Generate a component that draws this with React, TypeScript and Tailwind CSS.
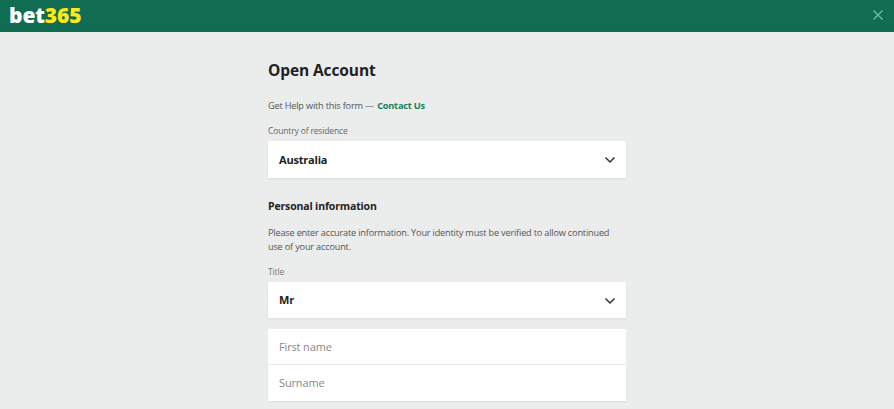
import React from "react";

const font = { fontFamily: '"Open Sans", "Noto Sans", sans-serif' };

function Chevron() {
  return (
    <svg width="12" height="8" viewBox="0 0 12 8" fill="none" className="shrink-0">
      <path d="M1.5 1.5 L6 6 L10.5 1.5" stroke="#333" strokeWidth="1.5" />
    </svg>
  );
}

function Select({ value, className }: { value: string; className: string }) {
  return (
    <div className={`flex items-center justify-between bg-white pl-[11px] pr-[10px] pt-[1px] shadow-[0_1px_2px_rgba(0,0,0,0.08)] ${className}`}>
      <span className="text-[11px] font-bold tracking-[-0.2px] text-[#222]">{value}</span>
      <Chevron />
    </div>
  );
}

export default function App() {
  return (
    <div className="h-[409px] w-[894px] overflow-hidden bg-[#ebecec]" style={font}>
      <header className="flex h-[32px] items-center justify-between border-b border-[#0f6a4e] bg-[#106d51] pb-[1px] pl-[9px] pr-[11px]">
        <div className="text-[21px] font-extrabold leading-none tracking-[-0.1px]">
          <span className="text-white">bet</span>
          <span className="text-[#ffe718]">365</span>
        </div>
        <svg width="10" height="10" viewBox="0 0 10 10" fill="none">
          <path d="M0.5 0.5 L9.5 9.5 M9.5 0.5 L0.5 9.5" stroke="#6fc4a6" strokeWidth="1.2" />
        </svg>
      </header>
      <main className="mx-auto w-[358px] pt-[27px]">
        <h1 className="text-[15.5px] font-bold leading-[22px] tracking-[-0.1px] text-[#222]">Open Account</h1>
        <p className="mt-[18px] text-[9.2px] leading-[14px] tracking-[-0.2px] text-[#555]">
          Get Help with this form — <span className="ml-[1px] font-bold text-[#14805e]">Contact Us</span>
        </p>
        <p className="mt-[12px] text-[8.5px] leading-[12px] tracking-[-0.15px] text-[#666]">Country of residence</p>
        <Select value="Australia" className="mt-[4px] h-[37px]" />
        <h2 className="mt-[20px] text-[10.5px] font-bold leading-[16px] tracking-[-0.15px] text-[#222]">Personal information</h2>
        <p className="mt-[12px] text-[9.2px] leading-[14px] tracking-[-0.2px] text-[#555]">
          Please enter accurate information. Your identity must be verified to allow continued
          <br />
          use of your account.
        </p>
        <p className="mt-[12px] text-[8.5px] leading-[12px] tracking-[-0.15px] text-[#777]">Title</p>
        <Select value="Mr" className="mt-[4px] h-[36px]" />
        <div className="mt-[11px] flex h-[35px] items-center bg-white pl-[11px] pt-[1px] text-[11px] tracking-[-0.15px] text-[#888]">First name</div>
        <div className="mt-[1px] flex h-[36px] items-center bg-white pl-[11px] pt-[1px] text-[11px] tracking-[-0.15px] text-[#888] shadow-[0_1px_2px_rgba(0,0,0,0.06)]">Surname</div>
      </main>
    </div>
  );
}
